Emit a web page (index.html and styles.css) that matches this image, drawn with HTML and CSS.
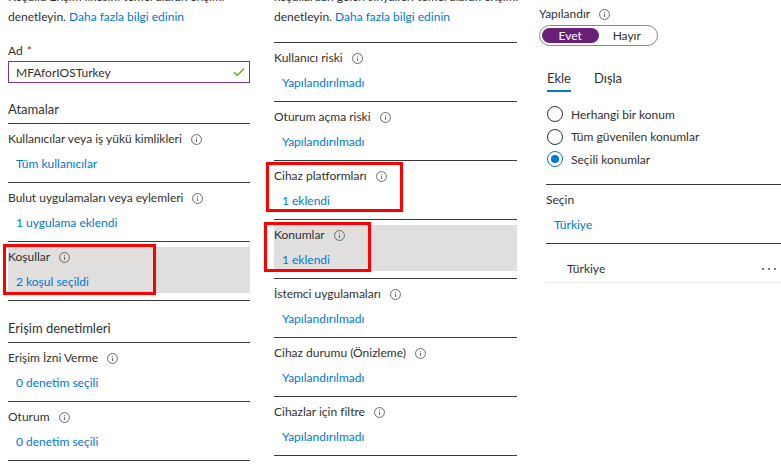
FILE: index.html
```html
<!DOCTYPE html>
<html lang="tr">
<head>
    <meta charset="UTF-8">
    <title>Koşullu Erişim - Yeni ilke</title>
    <link rel="stylesheet" href="styles.css">
</head>
<body>

<div class="page">
    <div class="col col-left">
        <p class="intro">Koşullu Erişim ilkesini temel alarak erişimi<br>denetleyin. <a href="#">Daha fazla bilgi edinin</a></p>

        <div class="field-label">Ad <span class="req">*</span></div>
        <div class="text-input">
            <span>MFAforIOSTurkey</span>
            <svg class="check" width="12" height="10" viewBox="0 0 12 10"><path d="M1 5.2l3.4 3.3L11 1.5" fill="none" stroke="#57a300" stroke-width="1.2"/></svg>
        </div>

        <h3 class="section-title">Atamalar</h3>
        <div class="item">
            <div class="item-btn">
                <div class="item-label">Kullanıcılar veya iş yükü kimlikleri <svg class="info" viewBox="0 0 12 12"><circle cx="6" cy="6" r="5.4"/><path d="M6 5.2v3.6"/><circle class="i-dot" cx="6" cy="3.5" r=".55"/></svg></div>
                <div class="item-value">Tüm kullanıcılar</div>
            </div>
        </div>
        <div class="item">
            <div class="item-btn">
                <div class="item-label">Bulut uygulamaları veya eylemleri <svg class="info" viewBox="0 0 12 12"><circle cx="6" cy="6" r="5.4"/><path d="M6 5.2v3.6"/><circle class="i-dot" cx="6" cy="3.5" r=".55"/></svg></div>
                <div class="item-value">1 uygulama eklendi</div>
            </div>
        </div>
        <div class="item">
            <div class="item-btn selected">
                <div class="item-label">Koşullar <svg class="info" viewBox="0 0 12 12"><circle cx="6" cy="6" r="5.4"/><path d="M6 5.2v3.6"/><circle class="i-dot" cx="6" cy="3.5" r=".55"/></svg></div>
                <div class="item-value">2 koşul seçildi</div>
                <span class="mark mark-conditions"></span>
            </div>
        </div>

        <h3 class="section-title second">Erişim denetimleri</h3>
        <div class="item">
            <div class="item-btn">
                <div class="item-label">Erişim İzni Verme <svg class="info" viewBox="0 0 12 12"><circle cx="6" cy="6" r="5.4"/><path d="M6 5.2v3.6"/><circle class="i-dot" cx="6" cy="3.5" r=".55"/></svg></div>
                <div class="item-value">0 denetim seçili</div>
            </div>
        </div>
        <div class="item">
            <div class="item-btn">
                <div class="item-label">Oturum <svg class="info" viewBox="0 0 12 12"><circle cx="6" cy="6" r="5.4"/><path d="M6 5.2v3.6"/><circle class="i-dot" cx="6" cy="3.5" r=".55"/></svg></div>
                <div class="item-value">0 denetim seçili</div>
            </div>
        </div>
    </div>

    <div class="col col-mid">
        <p class="intro">koşullardan gelen sinyalleri temel alarak erişimi<br>denetleyin. <a href="#">Daha fazla bilgi edinin</a></p>

        <div class="list">
            <div class="item">
                <div class="item-btn">
                    <div class="item-label">Kullanıcı riski <svg class="info" viewBox="0 0 12 12"><circle cx="6" cy="6" r="5.4"/><path d="M6 5.2v3.6"/><circle class="i-dot" cx="6" cy="3.5" r=".55"/></svg></div>
                    <div class="item-value">Yapılandırılmadı</div>
                </div>
            </div>
            <div class="item">
                <div class="item-btn">
                    <div class="item-label">Oturum açma riski <svg class="info" viewBox="0 0 12 12"><circle cx="6" cy="6" r="5.4"/><path d="M6 5.2v3.6"/><circle class="i-dot" cx="6" cy="3.5" r=".55"/></svg></div>
                    <div class="item-value">Yapılandırılmadı</div>
                </div>
            </div>
            <div class="item">
                <div class="item-btn">
                    <div class="item-label">Cihaz platformları <svg class="info" viewBox="0 0 12 12"><circle cx="6" cy="6" r="5.4"/><path d="M6 5.2v3.6"/><circle class="i-dot" cx="6" cy="3.5" r=".55"/></svg></div>
                    <div class="item-value">1 eklendi</div>
                    <span class="mark mark-platforms"></span>
                </div>
            </div>
            <div class="item">
                <div class="item-btn selected">
                    <div class="item-label">Konumlar <svg class="info" viewBox="0 0 12 12"><circle cx="6" cy="6" r="5.4"/><path d="M6 5.2v3.6"/><circle class="i-dot" cx="6" cy="3.5" r=".55"/></svg></div>
                    <div class="item-value">1 eklendi</div>
                    <span class="mark mark-locations"></span>
                </div>
            </div>
            <div class="item">
                <div class="item-btn">
                    <div class="item-label">İstemci uygulamaları <svg class="info" viewBox="0 0 12 12"><circle cx="6" cy="6" r="5.4"/><path d="M6 5.2v3.6"/><circle class="i-dot" cx="6" cy="3.5" r=".55"/></svg></div>
                    <div class="item-value">Yapılandırılmadı</div>
                </div>
            </div>
            <div class="item">
                <div class="item-btn">
                    <div class="item-label">Cihaz durumu (Önizleme) <svg class="info" viewBox="0 0 12 12"><circle cx="6" cy="6" r="5.4"/><path d="M6 5.2v3.6"/><circle class="i-dot" cx="6" cy="3.5" r=".55"/></svg></div>
                    <div class="item-value">Yapılandırılmadı</div>
                </div>
            </div>
            <div class="item">
                <div class="item-btn">
                    <div class="item-label">Cihazlar için filtre <svg class="info" viewBox="0 0 12 12"><circle cx="6" cy="6" r="5.4"/><path d="M6 5.2v3.6"/><circle class="i-dot" cx="6" cy="3.5" r=".55"/></svg></div>
                    <div class="item-value">Yapılandırılmadı</div>
                </div>
            </div>
        </div>
    </div>

    <div class="col col-right">
        <div class="field-label top">Yapılandır <svg class="info" viewBox="0 0 12 12"><circle cx="6" cy="6" r="5.4"/><path d="M6 5.2v3.6"/><circle class="i-dot" cx="6" cy="3.5" r=".55"/></svg></div>
        <div class="toggle">
            <span class="toggle-opt on">Evet</span>
            <span class="toggle-opt">Hayır</span>
        </div>

        <div class="panel">
            <div class="tabs">
                <span class="tab active">Ekle</span>
                <span class="tab">Dışla</span>
            </div>

            <div class="radios">
                <label class="radio"><span class="circle"></span>Herhangi bir konum</label>
                <label class="radio"><span class="circle"></span>Tüm güvenilen konumlar</label>
                <label class="radio checked"><span class="circle"></span>Seçili konumlar</label>
            </div>

            <div class="list">
                <div class="item">
                    <div class="item-btn">
                        <div class="item-label">Seçin</div>
                        <div class="item-value">Türkiye</div>
                    </div>
                </div>
            </div>

            <div class="loc-row">
                <span>Türkiye</span>
                <svg class="more" width="16" height="4" viewBox="0 0 16 4"><circle cx="2" cy="2" r="1.1"/><circle cx="8" cy="2" r="1.1"/><circle cx="14" cy="2" r="1.1"/></svg>
            </div>
        </div>
    </div>
</div>

</body>
</html>
```

FILE: styles.css
```css
body {
    margin: 0;
    font-family: Lato, "Liberation Sans", sans-serif;
    font-size: 12px;
    color: #323130;
    background: #fff;
    overflow: hidden;
}
a {
    color: #0078d4;
    text-decoration: none;
}
.page {
    display: flex;
    padding-left: 8px;
}
.col-left {
    width: 242px;
}
.col-mid {
    width: 243px;
    margin-left: 24px;
}
.col-right {
    flex: 1;
    margin-left: 22px;
}
.intro {
    margin: -13px 0 0;
    line-height: 20px;
    white-space: nowrap;
}

/* name field */
.field-label {
    display: flex;
    align-items: center;
    gap: 4px;
    margin-top: 15px;
    line-height: 18px;
}
.field-label.top {
    margin-top: 5px;
    gap: 9px;
}
.req {
    color: #a4262c;
}
.text-input {
    display: flex;
    align-items: center;
    justify-content: space-between;
    box-sizing: border-box;
    height: 22px;
    margin-top: 1px;
    padding: 0 4px 0 7px;
    border: 1px solid #7f3596;
}

.section-title {
    margin: 16px 0 0;
    padding-bottom: 4px;
    font-size: 13px;
    font-weight: normal;
    line-height: 20px;
    border-bottom: 1px solid #3b3a39;
}
.section-title.second {
    margin-top: 17px;
}

/* assignment / condition rows */
.list {
    margin-top: 15px;
    border-top: 1px solid #3b3a39;
}
.item {
    padding: 5px 0 7px;
    border-bottom: 1px solid #3b3a39;
}
.item-btn {
    position: relative;
    padding: 1px 0 2px;
}
.item-btn.selected {
    background: #e1dfdd;
}
.item-label {
    display: flex;
    align-items: center;
    gap: 9px;
    line-height: 18px;
}
.item-value {
    margin-top: 7px;
    padding-left: 8px;
    line-height: 18px;
    color: #0078d4;
}
.info {
    width: 11px;
    height: 11px;
    fill: none;
    stroke: #605e5c;
    stroke-width: 1;
}
.info .i-dot {
    fill: #605e5c;
    stroke: none;
}

/* red highlight boxes drawn over the screenshot */
.mark {
    position: absolute;
    box-sizing: border-box;
    border: 3px solid #f00;
}
.mark-conditions {
    top: -3px;
    left: -5px;
    width: 153px;
    height: 51px;
}
.mark-platforms {
    top: -4px;
    left: -8px;
    width: 137px;
    height: 50px;
}
.mark-locations {
    top: -3px;
    left: -10px;
    width: 107px;
    height: 50px;
}

/* configure toggle */
.toggle {
    display: flex;
    align-items: center;
    box-sizing: border-box;
    width: 119px;
    height: 21px;
    margin-top: 2px;
    padding: 0 2px;
    border: 1px solid #8a8886;
    border-radius: 11px;
}
.toggle-opt {
    flex: 1;
    text-align: center;
    line-height: 15px;
}
.toggle-opt.on {
    background: #6b2077;
    color: #fff;
    border-radius: 8px;
}

.panel {
    padding-left: 7px;
}
.tabs {
    display: flex;
    gap: 23px;
    margin-top: 22px;
    padding-left: 1px;
}
.tab {
    font-size: 13px;
    line-height: 20px;
    padding-bottom: 2px;
    border-bottom: 2px solid transparent;
}
.tab.active {
    border-bottom-color: #0078d4;
}
.radios {
    margin-top: 11px;
    padding-left: 1px;
}
.radio {
    display: flex;
    align-items: center;
    gap: 8px;
    height: 22.5px;
}
.circle {
    box-sizing: border-box;
    width: 16px;
    height: 16px;
    border: 1px solid #323130;
    border-radius: 50%;
    position: relative;
}
.radio.checked .circle {
    border-color: #0078d4;
}
.radio.checked .circle::after {
    content: "";
    position: absolute;
    top: 3px;
    left: 3px;
    width: 8px;
    height: 8px;
    border-radius: 50%;
    background: #0078d4;
}
.panel .list {
    margin-top: 13px;
}

.loc-row {
    display: flex;
    align-items: center;
    justify-content: space-between;
    padding: 15px 4px 3px 21px;
    line-height: 20px;
    border-bottom: 1px solid #edebe9;
}
.more {
    fill: #605e5c;
}
```
